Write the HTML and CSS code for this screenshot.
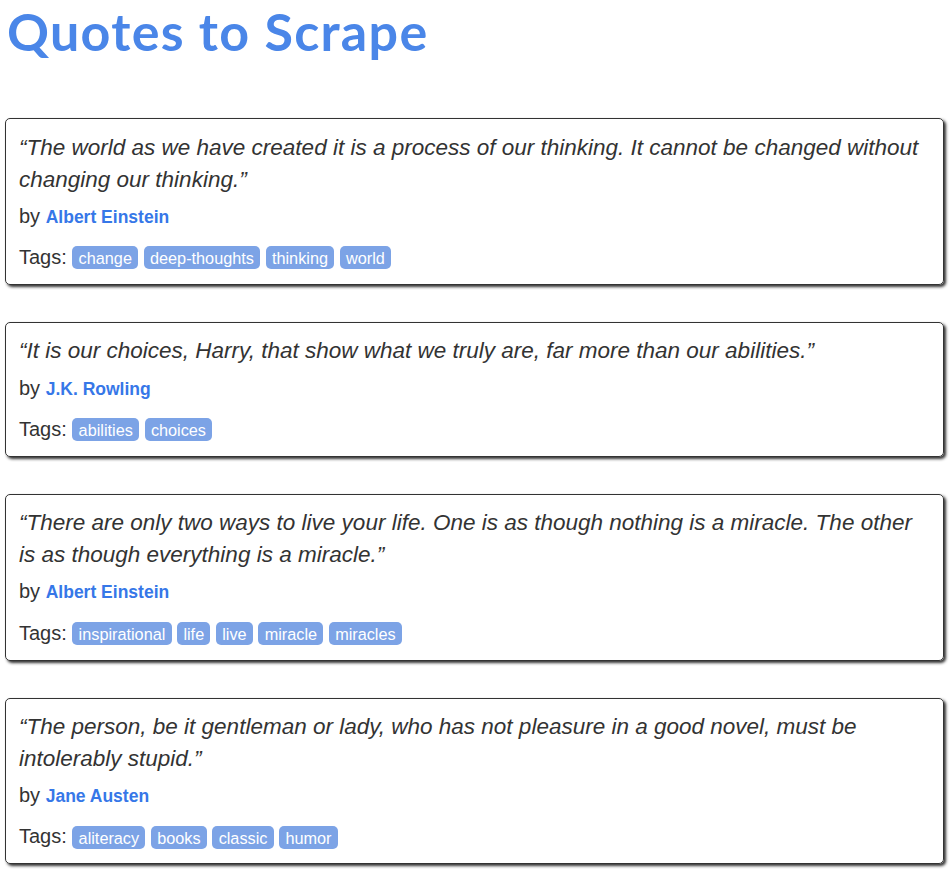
FILE: index.html
```html
<!DOCTYPE html>
<html lang="en">
<head>
    <meta charset="UTF-8">
    <meta name="viewport" content="width=device-width, initial-scale=1.0">
    <title>Quotes to Scrape</title>
    <link rel="stylesheet" href="styles.css">
</head>
<body>
    <div class="header">
        <h1><a href="#">Quotes to Scrape</a></h1>
    </div>

    <div class="quote">
        <span class="text">“The world as we have created it is a process of our thinking. It cannot be changed without changing our thinking.”</span>
        <span class="by">by <a class="author" href="#">Albert Einstein</a></span>
        <div class="tags">
            Tags:
            <a class="tag" href="#">change</a>
            <a class="tag" href="#">deep-thoughts</a>
            <a class="tag" href="#">thinking</a>
            <a class="tag" href="#">world</a>
        </div>
    </div>

    <div class="quote">
        <span class="text">“It is our choices, Harry, that show what we truly are, far more than our abilities.”</span>
        <span class="by">by <a class="author" href="#">J.K. Rowling</a></span>
        <div class="tags">
            Tags:
            <a class="tag" href="#">abilities</a>
            <a class="tag" href="#">choices</a>
        </div>
    </div>

    <div class="quote">
        <span class="text">“There are only two ways to live your life. One is as though nothing is a miracle. The other is as though everything is a miracle.”</span>
        <span class="by">by <a class="author" href="#">Albert Einstein</a></span>
        <div class="tags">
            Tags:
            <a class="tag" href="#">inspirational</a>
            <a class="tag" href="#">life</a>
            <a class="tag" href="#">live</a>
            <a class="tag" href="#">miracle</a>
            <a class="tag" href="#">miracles</a>
        </div>
    </div>

    <div class="quote">
        <span class="text">“The person, be it gentleman or lady, who has not pleasure in a good novel, must be intolerably stupid.”</span>
        <span class="by">by <a class="author" href="#">Jane Austen</a></span>
        <div class="tags">
            Tags:
            <a class="tag" href="#">aliteracy</a>
            <a class="tag" href="#">books</a>
            <a class="tag" href="#">classic</a>
            <a class="tag" href="#">humor</a>
        </div>
    </div>
</body>
</html>
```

FILE: styles.css
```css
body {
    margin: 0;
    padding: 0 8px 0 5px;
    font-family: "Liberation Sans", Arial, sans-serif;
    font-size: 20px;
    line-height: 1.42857;
    color: #333;
    background: #fff;
}
a {
    text-decoration: none;
}
.header h1 {
    margin: 0 0 56px 2px;
    padding-top: 0;
    font-family: Lato, "Noto Sans", sans-serif;
    font-weight: 700;
    font-size: 52px;
    line-height: 62px;
    letter-spacing: 1.3px;
}
.header h1 a {
    color: #4a86e8;
}
.quote {
    padding: 12.5px 13px 12.5px 13px;
    margin-bottom: 37px;
    border: 1px solid #333;
    border-radius: 5px;
    box-shadow: 2px 2px 3px #333;
}
.quote .text {
    display: block;
    font-size: 22.5px;
    font-style: italic;
    margin-bottom: 6px;
}
.quote .by {
    display: block;
}
.author {
    font-weight: bold;
    font-size: 17.5px;
    color: #3677e8;
}
.tags {
    margin-top: 12.5px;
}
.tag {
    padding: 2.5px 6.25px;
    font-size: 16.25px;
    color: #fff;
    background-color: #7ca3e6;
    border-radius: 5px;
}
```
